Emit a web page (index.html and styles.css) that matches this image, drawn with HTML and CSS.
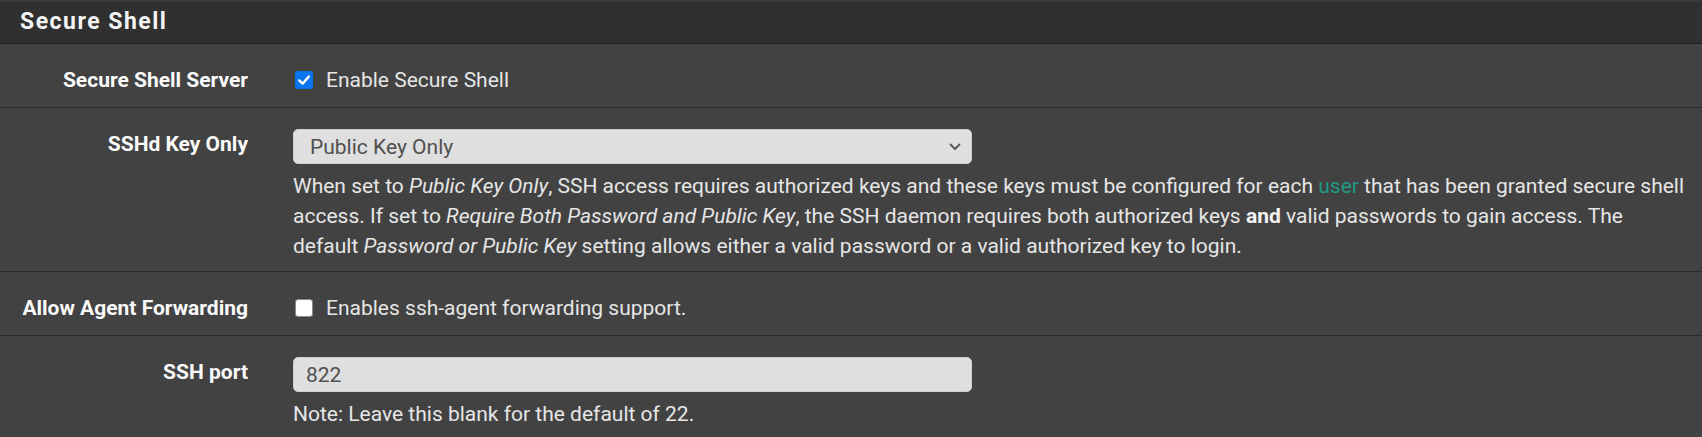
FILE: index.html
```html
<!DOCTYPE html>
<html lang="en">
<head>
<meta charset="utf-8">
<title>Secure Shell</title>
<link rel="stylesheet" href="styles.css">
</head>
<body>
<div class="panel">
  <div class="panel-heading"><h2 class="panel-title">Secure Shell</h2></div>
  <div class="panel-body">
    <div class="form-row">
      <div class="label">Secure Shell Server</div>
      <div class="content">
        <label class="check-line">
          <span class="checkbox checked"><svg viewBox="0 0 18 18" width="18" height="18"><path d="M4.2 9.4 L7.6 12.6 L13.8 5.6" fill="none" stroke="#fff" stroke-width="2.4" stroke-linecap="round" stroke-linejoin="round"/></svg></span>
          <span>Enable Secure Shell</span>
        </label>
      </div>
    </div>
    <div class="form-row">
      <div class="label">SSHd Key Only</div>
      <div class="content">
        <div class="select">
          <span>Public Key Only</span>
          <svg class="chev" viewBox="0 0 12 8" width="12" height="8"><path d="M1.5 1.5 L6 6 L10.5 1.5" fill="none" stroke="#555" stroke-width="1.8" stroke-linecap="round" stroke-linejoin="round"/></svg>
        </div>
        <p class="help">When set to <em>Public Key Only</em>, SSH access requires authorized keys and these keys must be configured for each <a href="#" class="link">user</a> that has been granted secure shell access. If set to <em>Require Both Password and Public Key</em>, the SSH daemon requires both authorized keys <strong>and</strong> valid passwords to gain access. The default <em>Password or Public Key</em> setting allows either a valid password or a valid authorized key to login.</p>
      </div>
    </div>
    <div class="form-row">
      <div class="label">Allow Agent Forwarding</div>
      <div class="content">
        <label class="check-line">
          <span class="checkbox"></span>
          <span>Enables ssh-agent forwarding support.</span>
        </label>
      </div>
    </div>
    <div class="form-row">
      <div class="label">SSH port</div>
      <div class="content">
        <div class="input">822</div>
        <p class="help">Note: Leave this blank for the default of 22.</p>
      </div>
    </div>
  </div>
</div>
</body>
</html>
```

FILE: styles.css
```css
html, body {
  margin: 0;
  padding: 0;
  background: #424242;
}
body {
  font-family: Roboto, "Liberation Sans", sans-serif;
  font-size: 21px;
  line-height: 30px;
  color: #e6e6e6;
  overflow: hidden;
}
.panel {
  width: 1702px;
}
.panel-heading {
  background: #303030;
  border-top: 2px solid #3a3a3a;
  border-bottom: 1px solid #1e1e1e;
  height: 41px;
  box-sizing: content-box;
  padding: 0 20px;
}
.panel-title {
  margin: 0;
  font-size: 23px;
  font-weight: 700;
  letter-spacing: 1.5px;
  color: #f4f4f4;
  line-height: 40px;
}
.form-row {
  display: grid;
  grid-template-columns: 248px 1fr;
  column-gap: 45px;
  padding: 21px 15px 12px 0;
  border-bottom: 1px solid #2a2a2a;
}
.label {
  text-align: right;
  font-weight: 700;
  color: #fafafa;
  line-height: 30px;
}
.content {
  min-width: 0;
}
.check-line {
  display: flex;
  align-items: center;
  height: 30px;
  gap: 13px;
  padding-left: 2px;
}
.checkbox {
  width: 18px;
  height: 18px;
  box-sizing: border-box;
  border-radius: 3px;
  background: #ffffff;
  border: 1px solid #8a8a8a;
  display: inline-flex;
  flex: none;
}
.checkbox.checked {
  background: #0b75f0;
  border-color: #0b75f0;
}
.checkbox svg {
  margin: -1px;
}
.select, .input {
  width: 679px;
  height: 35px;
  box-sizing: border-box;
  background: #dfdfdf;
  border: 1px solid #cfcfcf;
  border-radius: 5px;
  color: #505050;
  display: flex;
  align-items: center;
  justify-content: space-between;
}
.select {
  padding: 0 10px 0 16px;
}
.input {
  padding: 0 12px;
}
.chev {
  display: block;
}
.help {
  margin: 7px 0 -2px;
  color: #e6e6e6;
}
.help em {
  font-style: italic;
}
.help strong {
  font-weight: 700;
  color: #f4f4f4;
}
.link {
  color: #1f9a85;
  text-decoration: none;
}
```
